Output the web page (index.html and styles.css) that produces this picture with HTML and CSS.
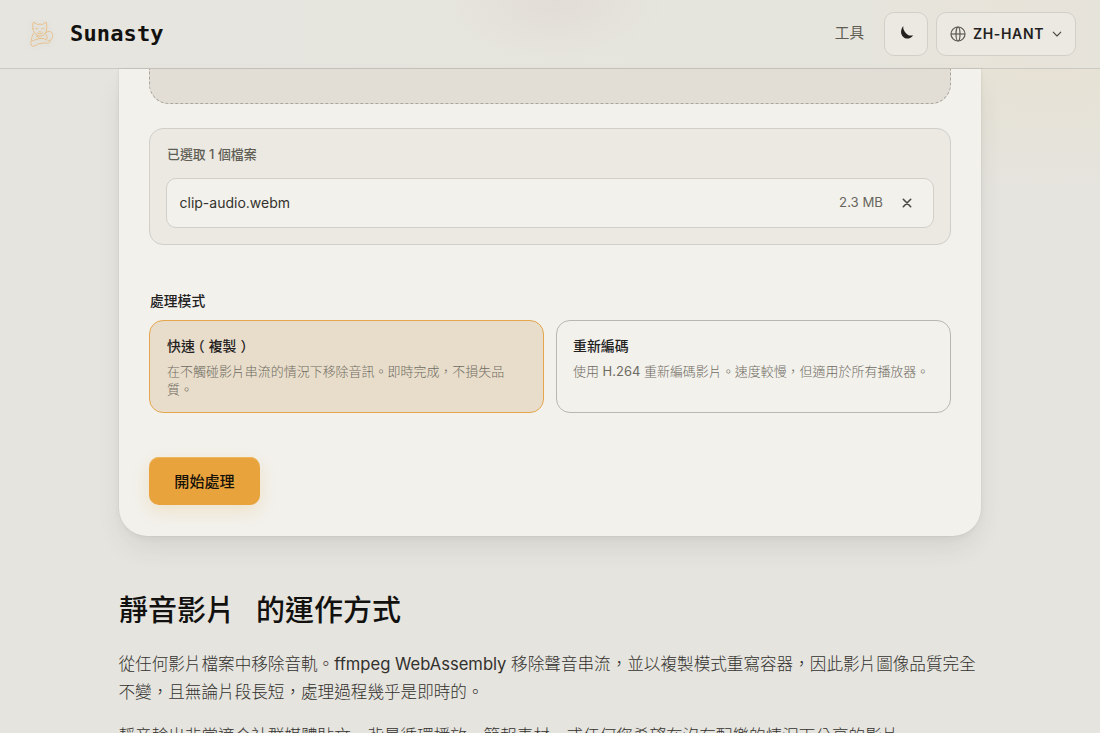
FILE: index.html
```html
<!DOCTYPE html>
<html lang="zh-Hant">
<head>
<meta charset="utf-8">
<title>Sunasty</title>
<link rel="stylesheet" href="styles.css">
</head>
<body>
<header class="header">
  <a class="brand">
    <svg class="cat" viewBox="0 0 28 32" fill="none" stroke="#e9b777" stroke-width="1" stroke-linecap="round" stroke-linejoin="round">
      <path d="M5 11C4.500 8 4.500 6 5.500 4l4 2.500q2.500-.8 5 0L18 4c1 3 1 5 .5 8-1 5-4 6-6.500 6s-6-2-7-7Z"/>
      <path d="M7.500 10.500q1.500-1 2.500.5M13.500 11q1-1.500 2.500-.5M11 13.500l1 .8 1-.8M9 15q3 2 6 0"/>
      <path d="M5.500 15.500C4 18 3.500 20 3.500 22.500c-1 2-1 5 1 5.700 2 .5 3-1 5-2l7-1.500c3 1 6 .3 6-2M4 23c3-1 5-2 8-2.500s6 .5 7 2M17.500 16c1.500 1 2 3 1.500 5M18 14.500c3-2 6-1 6.500 2 .8 3-1 6-4 6M8 18l3 1.500"/>
    </svg>
    <span class="wordmark">Sunasty</span>
  </a>
  <nav class="nav">
    <a class="tools">工具</a>
    <button class="pill theme" aria-label="theme"><svg width="16" height="16" viewBox="0 0 16 16"><path d="M5.300 0C2.500 3.500 2.300 7.900 5 10.700c2.700 2.800 7.600 2.500 10.200-1.500-2.500.7-5 .3-6.700-1.500C6.200 5.300 4.800 3 5.300 0Z" fill="#23211e"/></svg></button>
    <button class="pill lang">
      <svg width="16" height="16" viewBox="0 0 16 16" fill="none" stroke="#5c5952" stroke-width="1.200"><circle cx="8" cy="8" r="7"/><ellipse cx="8" cy="8" rx="2" ry="7"/><path d="M1 8h14"/></svg>
      <span>ZH-HANT</span>
      <svg class="chev" width="10" height="10" viewBox="0 0 10 10" fill="none" stroke="#4a4741" stroke-width="1.100" stroke-linecap="round" stroke-linejoin="round"><path d="M1.200 3.200 5 7l3.800-3.800"/></svg>
    </button>
  </nav>
</header>
<main class="main">
  <section class="panel">
    <div class="dropzone"></div>
    <div class="files">
      <div class="count">已選取 1 個檔案</div>
      <div class="file">
        <span class="name">clip-audio.webm</span>
        <span class="size">2.3 MB</span>
        <svg width="10" height="10" viewBox="0 0 10 10" stroke="#4a4842" stroke-width="1.600" stroke-linecap="round"><path d="m1.300 1.300 7.400 7.400m0-7.400L1.300 8.700"/></svg>
      </div>
    </div>
    <div class="label">處理模式</div>
    <div class="modes">
      <div class="mode selected"><div class="mode-title">快速<span class="open">（</span>複製<span class="close">）</span></div><div class="desc">在不觸碰影片串流的情況下移除音訊。即時完成，不損失品質。</div></div>
      <div class="mode"><div class="mode-title">重新編碼</div><div class="desc">使用 <span class="codec">H.264</span> 重新編碼影片。速度較慢，但適用於所有播放器。</div></div>
    </div>
    <button class="start">開始處理</button>
  </section>
  <article class="article">
    <h2><span class="tool">靜音影片</span>的運作方式</h2>
    <p>從任何影片檔案中移除音軌。<span class="latin">ffmpeg WebAssembly</span> 移除聲音串流，並以複製模式重寫容器，因此影片圖像品質完全不變，且無論片段長短，處理過程幾乎是即時的。</p>
    <p>靜音輸出非常適合社群媒體貼文、背景循環播放、簡報素材，或任何您希望在沒有配樂的情況下分享的影片。</p>
  </article>
</main>
</body>
</html>
```
FILE: styles.css
```css
* { box-sizing: border-box; }
body {
  margin: 0; height: 733px; overflow: hidden;
  font-family: Inter, "Noto Sans CJK TC", sans-serif;
  color: #23211e;
  background:
    radial-gradient(ellipse 290px 190px at 1050px 20px, rgba(233,220,188,.42), transparent 100%),
    #e5e4df;
}
button { font: inherit; color: inherit; }
.header {
  height: 69px; padding: 0 24px 1px 28px;
  display: flex; align-items: center; justify-content: space-between;
  border-bottom: 1px solid #cac9c4;
  background:
    radial-gradient(ellipse 110px 60px at 555px 0, rgba(221,208,202,.4), transparent),
    linear-gradient(90deg, #e6e5df, #e5e5dd 75%, #e8e3d9 92%, #e6e3db);
}
.brand { display: flex; align-items: center; gap: 14px; }
.cat { width: 28px; height: 32px; opacity: .8; filter: drop-shadow(0 1px 3px rgba(120,110,90,.2)); }
.wordmark { font: bold 22px/30px "DejaVu Sans Mono", monospace; letter-spacing: .15px; color: #12110f; }
.nav { display: flex; align-items: center; }
.tools { font-size: 14.600px; line-height: 22px; font-weight: 400; color: #5f5c54; margin: 0 20px 2px 0; }
.pill {
  height: 44px; border: 1px solid #d1cfc9; border-radius: 10px; background: #ebe9e2;
  display: flex; align-items: center; padding: 0;
}
.theme { width: 44px; justify-content: center; margin-right: 8px; }
.lang { width: 140px; padding: 0 13px; font-size: 14px; font-weight: 600; letter-spacing: .65px; }
.lang span { margin-left: 7px; }
.chev { margin-left: auto; }
.main { width: 862px; margin: 0 auto; }
.panel {
  height: 467px; padding: 0 30px; background: #f2f1ec;
  border-radius: 0 0 28px 28px;
  box-shadow: 0 0 0 1px rgba(80,75,60,.04), 0 14px 28px -6px rgba(60,58,40,.12), 0 2px 6px rgba(60,55,40,.04);
}
.dropzone { height: 35px; background: #e2ded6; border: 1px dashed #aaa69e; border-top: 0; border-radius: 0 0 20px 20px; }
.files { margin-top: 24px; height: 117px; padding: 16px; border: 1px solid #d1cfca; border-radius: 14px; background: #ebe9e2; }
.count { padding-left: 1px; font-size: 12.900px; line-height: 20px; font-weight: 500; color: #605d55; }
.file {
  margin-top: 13px; height: 50px; padding: 0 21px 0 12.500px; display: flex; align-items: center;
  border: 1px solid #d1cfca; border-radius: 10px; background: #f2f1ec;
}
.name { flex: 1; font-size: 14px; line-height: 20px; color: #33312d; }
.size { font-size: 13.200px; line-height: 20px; color: #68655d; margin: 0 19px 2px 0; }
.label { margin-top: 46px; padding-left: 1px; font-size: 13.800px; line-height: 20px; font-weight: 500; }
.modes { margin-top: 9px; display: grid; grid-template-columns: 1fr 1fr; gap: 12px; height: 93px; }
.mode { border: 1px solid #b9b7b2; border-radius: 14px; padding: 14px 16px; }
.selected { border-color: #e5a64d; background: #e8ddca; padding-left: 17px; }
.mode-title { font-size: 13.900px; line-height: 22px; font-weight: 500; }
.open { margin: 0 4px 0 -4px; }
.close { margin-left: 4px; }
.desc { font-size: 12.980px; line-height: 18px; font-weight: 300; color: #6f6b62; margin-top: 5px; }
.codec { font-weight: 400; }
.start {
  display: block; margin-top: 44px; width: 111px; height: 48px; padding: 0 0 2px;
  border: 0; border-radius: 10px; background: #e8a33d;
  box-shadow: 0 6px 18px rgba(232,163,61,.2), inset 0 1px 0 #f0b65f;
  font-size: 15.100px; font-weight: 500; color: #171208;
}
h2 { margin: 53px 0 0; font-size: 29px; line-height: 44px; font-weight: 500; color: #12110f; }
.tool { margin-right: 21px; }
p { margin: 17px 0 0 -.5px; font-size: 16.600px; line-height: 28px; font-weight: 300; color: #33312d; }
p + p { margin-top: 16px; }
.latin { font-weight: 400; letter-spacing: -.01px; }
```
